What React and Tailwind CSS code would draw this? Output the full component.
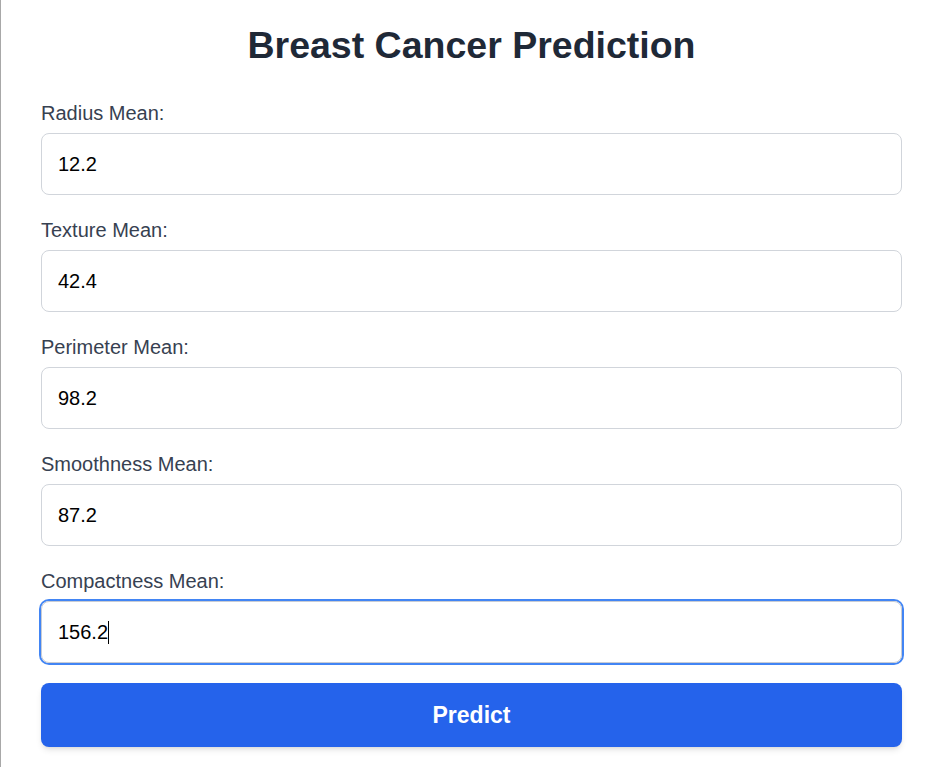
import { useState } from "react";

const fields = [
  { name: "radius_mean", label: "Radius Mean:", value: "12.2" },
  { name: "texture_mean", label: "Texture Mean:", value: "42.4" },
  { name: "perimeter_mean", label: "Perimeter Mean:", value: "98.2" },
  { name: "smoothness_mean", label: "Smoothness Mean:", value: "87.2" },
];

export default function App() {
  const [form, setForm] = useState(
    Object.fromEntries(fields.map((f) => [f.name, f.value]))
  );

  const onChange = (e) => setForm({ ...form, [e.target.name]: e.target.value });

  return (
    <div className="min-h-[767px] bg-white border-l border-[#a8a8a8] pl-[40px] font-['Liberation_Sans',Arial,sans-serif]">
      <div className="w-[861px] pt-[23px]">
        <h1 className="text-[37.5px] leading-[44px] font-bold text-center text-[#1f2937]">
          Breast Cancer Prediction
        </h1>

        <form className="mt-[34px]" onSubmit={(e) => e.preventDefault()}>
          {fields.map((f) => (
            <div key={f.name} className="mb-[23px]">
              <label className="block text-[20px] leading-[24px] text-[#374151]">
                {f.label}
              </label>
              <input
                type="text"
                name={f.name}
                value={form[f.name]}
                onChange={onChange}
                className="mt-[8px] block w-full h-[62px] px-4 text-[20px] text-black border border-[#d1d5db] rounded-lg outline-none"
              />
            </div>
          ))}

          {/* Compactness Mean (focused) */}
          <div className="mb-[20px]">
            <label className="block text-[20px] leading-[24px] text-[#374151]">
              Compactness Mean:
            </label>
            <div className="mt-[8px] flex items-center w-full h-[62px] px-4 text-[20px] text-black border border-[#c9ccd3] rounded-lg ring-2 ring-[#4285f4]">
              <span>156.2</span>
              <span className="inline-block w-px h-[23px] bg-black" />
            </div>
          </div>

          {/* Actions */}
          <button
            type="submit"
            className="w-full h-[64px] rounded-lg bg-[#2563eb] text-white text-[23px] font-bold shadow-md"
          >
            Predict
          </button>
        </form>
      </div>
    </div>
  );
}
